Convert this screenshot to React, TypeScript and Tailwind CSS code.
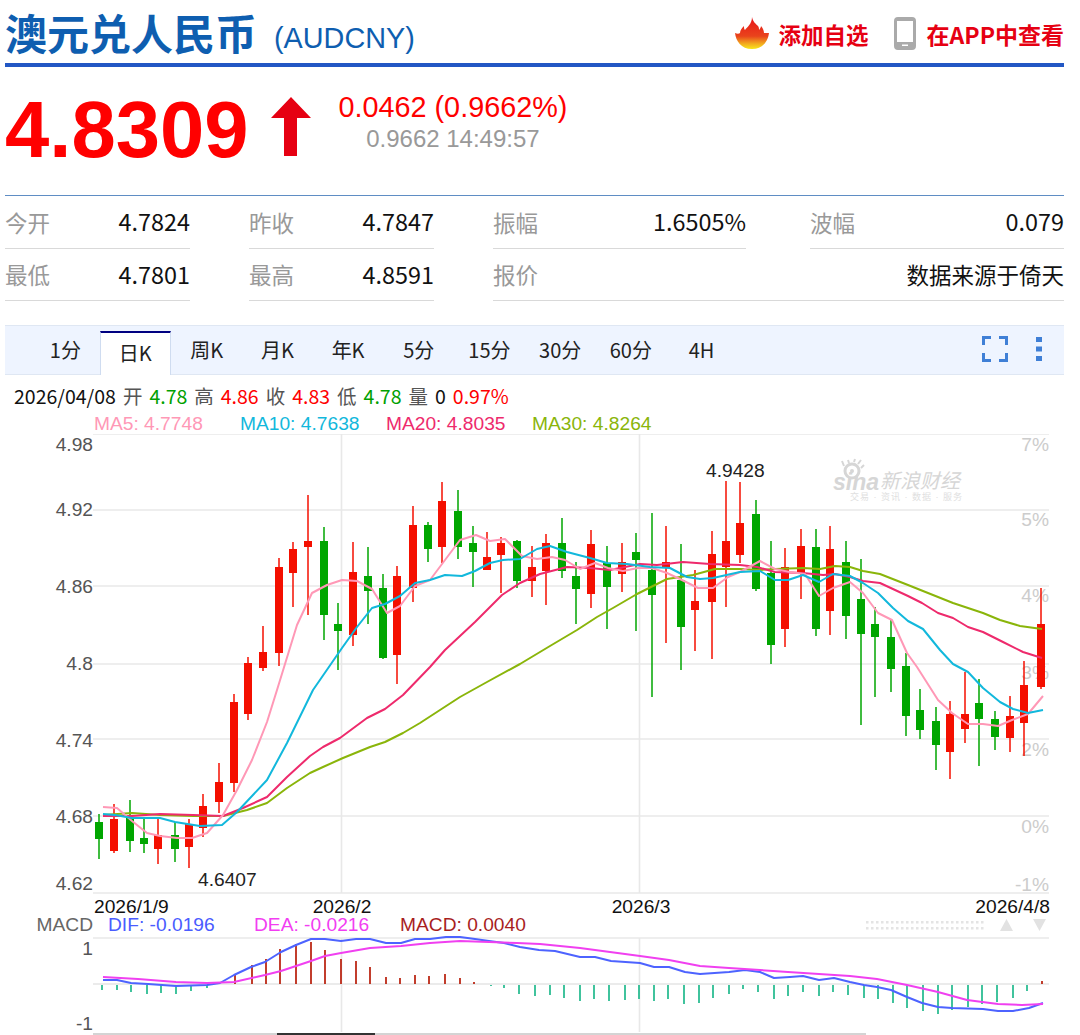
const candles: [number, string, number, number, number, number][] = [
  [99, 'g', 814, 822, 839, 859], [114, 'r', 804, 819, 851, 853], [130, 'g', 800, 818, 841, 852], [144, 'g', 819, 838, 844, 853],
  [158, 'r', 817, 835, 849, 864], [175, 'g', 822, 835, 849, 862], [189, 'r', 819, 824, 847, 868], [203, 'r', 794, 806, 828, 837],
  [219, 'r', 763, 782, 802, 813], [234, 'r', 694, 702, 783, 792], [248, 'r', 657, 663, 714, 720], [263, 'r', 626, 652, 668, 671],
  [279, 'r', 558, 567, 653, 666], [293, 'r', 542, 549, 573, 607], [308, 'r', 495, 541, 547, 615], [324, 'g', 527, 541, 615, 640],
  [338, 'g', 603, 624, 631, 670], [353, 'r', 542, 572, 635, 646], [368, 'g', 547, 576, 591, 624], [383, 'g', 574, 588, 658, 659],
  [397, 'r', 566, 576, 655, 684], [413, 'r', 506, 525, 588, 602], [428, 'g', 522, 525, 549, 562], [442, 'r', 482, 501, 547, 563],
  [458, 'g', 490, 511, 547, 559], [473, 'g', 526, 543, 552, 587], [487, 'r', 532, 557, 570, 570], [501, 'r', 537, 543, 555, 593],
  [517, 'g', 540, 541, 581, 588], [532, 'r', 546, 567, 581, 597], [546, 'r', 534, 543, 571, 605], [562, 'g', 518, 543, 571, 578],
  [576, 'g', 562, 576, 589, 624], [591, 'r', 530, 544, 594, 608], [607, 'g', 546, 563, 587, 629], [622, 'r', 543, 562, 574, 592],
  [636, 'g', 533, 552, 560, 631], [652, 'g', 513, 570, 595, 697], [666, 'r', 526, 562, 567, 643], [681, 'g', 544, 580, 627, 670],
  [695, 'r', 570, 601, 610, 651], [712, 'r', 531, 554, 602, 659], [726, 'r', 481, 541, 567, 607], [740, 'r', 482, 523, 555, 563],
  [756, 'g', 500, 514, 589, 591], [771, 'g', 541, 573, 645, 664], [785, 'r', 548, 567, 629, 647], [801, 'r', 529, 546, 573, 599],
  [816, 'g', 529, 547, 629, 636], [830, 'r', 526, 549, 611, 635], [846, 'g', 541, 562, 616, 639], [861, 'g', 559, 599, 634, 725],
  [875, 'g', 607, 624, 637, 697], [891, 'g', 619, 637, 669, 692], [906, 'g', 653, 666, 716, 736], [920, 'g', 689, 710, 730, 739],
  [936, 'g', 707, 721, 745, 770], [950, 'r', 701, 714, 752, 779], [965, 'r', 672, 714, 729, 743], [979, 'g', 679, 703, 719, 766],
  [995, 'g', 711, 719, 737, 750], [1010, 'r', 696, 716, 738, 752], [1024, 'r', 661, 685, 723, 756], [1041, 'r', 588, 624, 687, 689],
]

const ma5 = '103,807 117,808 132,821 147,833 160,836 177,838 192,838 207,833 223,815 237,790 252,760 267,722 277,690 297,625 312,593 327,585 342,580 357,581 372,589 387,613 400,606 415,586 430,580 445,560 460,540 476,535 490,541 505,539 522,556 537,559 552,557 565,560 580,569 595,563 608,568 623,571 638,568 652,568 667,573 682,580 698,588 713,588 728,577 740,572 760,561 775,569 790,572 805,574 819,596 833,588 850,582 863,593 878,613 892,620 907,653 917,667 938,700 952,713 968,724 983,724 998,726 1012,720 1028,714 1043,696'
const ma10 = '103,814 115,815 132,818 160,818 175,822 200,826 222,825 237,812 267,780 287,743 313,690 342,648 357,627 372,608 385,604 400,596 415,583 430,580 445,575 462,576 475,571 490,563 503,560 520,559 537,549 550,546 567,552 590,558 607,563 627,564 650,567 670,568 687,577 700,579 713,578 740,572 760,571 775,580 788,580 803,575 819,582 833,574 850,576 863,583 878,593 893,608 908,621 923,629 940,650 953,664 968,672 983,688 1000,702 1013,709 1028,713 1043,710'
const ma20 = '103,816 132,816 160,814 193,815 223,816 243,808 267,797 287,777 310,756 323,747 340,738 367,718 385,709 403,695 430,667 445,650 475,622 502,595 520,583 540,574 567,567 590,568 610,570 640,564 657,565 683,562 710,564 740,565 757,567 775,572 803,573 823,575 835,574 850,577 863,581 880,583 908,596 922,603 938,613 953,618 968,627 983,632 1003,642 1023,652 1042,658'
const ma30 = '103,815 132,813 160,815 193,816 223,816 247,810 267,803 287,788 310,773 323,767 343,758 370,747 385,742 403,733 420,723 440,710 460,697 487,682 520,664 550,646 577,630 597,617 613,608 637,594 667,579 693,575 715,569 740,569 760,570 775,569 803,568 820,569 835,566 850,567 863,571 880,574 908,585 933,595 953,603 983,613 1000,620 1020,626 1042,629'
const dif = '103,980 117,980 131,983 148,984 176,986 207,985 220,983 234,975 251,967 265,962 281,952 296,945 311,939 325,939 341,941 356,939 370,939 386,943 401,943 415,939 430,939 446,937 460,937 475,939 489,941 504,943 520,947 539,950 555,951 580,957 595,957 611,961 640,963 654,967 669,967 685,972 700,974 729,972 745,970 760,972 774,978 790,977 803,976 819,980 834,978 850,982 864,985 877,987 891,990 907,997 922,1003 938,1007 952,1008 983,1009 998,1011 1013,1011 1029,1008 1043,1003'
const dea = '103,977 138,979 176,982 207,983 234,982 265,975 281,971 296,966 311,961 325,956 341,953 370,948 401,946 430,943 460,941 489,942 517,943 540,944 580,948 640,956 669,960 700,966 729,968 760,970 788,972 819,974 850,976 877,979 907,985 938,992 967,1000 998,1004 1022,1005 1043,1004'

const histRed: [number, number][] = [[235, 974], [252, 965], [266, 959], [280, 949], [296, 944], [311, 942], [325, 950], [341, 959], [356, 961], [370, 967], [386, 977], [400, 978], [415, 975], [429, 976], [445, 974], [460, 978], [474, 982], [1042, 981]]
const histGreen: [number, number][] = [[102, 990], [117, 990], [131, 992], [147, 994], [161, 993], [176, 994], [191, 991], [207, 988], [491, 986], [504, 988], [519, 994], [535, 996], [550, 995], [564, 998], [580, 1001], [594, 999], [609, 1001], [625, 1000], [639, 999], [654, 1001], [668, 999], [684, 1004], [699, 1003], [713, 998], [729, 994], [743, 989], [758, 992], [774, 999], [788, 996], [803, 992], [819, 996], [833, 992], [848, 995], [864, 998], [878, 999], [893, 1003], [907, 1008], [923, 1011], [938, 1014], [952, 1010], [968, 1007], [982, 1004], [997, 1002], [1013, 998], [1027, 991]]

const priceLabels: [string, number][] = [['4.98', 451], ['4.92', 516], ['4.86', 593], ['4.8', 670], ['4.74', 747], ['4.68', 823], ['4.62', 890]]
const pctLabels: [string, number][] = [['7%', 451], ['5%', 526], ['4%', 602], ['3%', 679], ['2%', 756], ['0%', 833], ['-1%', 891]]
const gridYs = [434, 510, 586, 664, 739, 816, 893]

const dotXs = Array.from({ length: 24 }, (_, i) => 866 + i * 5)

function Chart() {
  return (
    <svg viewBox="0 434 1080 601" className="block w-[1080px] h-[601px] [font-family:'Liberation_Sans','Noto_Sans_CJK_SC',sans-serif]">
      {gridYs.map((y) => (
        <line key={y} x1="93" x2="1049" y1={y} y2={y} stroke="#e8e8e8" strokeWidth="1.6" />
      ))}
      <line x1="341.5" x2="341.5" y1="434" y2="893" stroke="#e8e8e8" strokeWidth="1.6" />
      <line x1="639.5" x2="639.5" y1="434" y2="893" stroke="#e8e8e8" strokeWidth="1.6" />

      {priceLabels.map(([t, y]) => (
        <text key={t} x="93" y={y} textAnchor="end" fontSize="19.2" fill="#555">{t}</text>
      ))}
      {pctLabels.map(([t, y]) => (
        <text key={t} x="1049" y={y} textAnchor="end" fontSize="19.2" fill="#ccc">{t}</text>
      ))}

      {/* sina watermark */}
      <g fill="#d6d6d6">
        <text x="833" y="490" fontSize="23" fontWeight="700" fontStyle="italic">sina</text>
        <circle cx="852" cy="471" r="7" fill="none" stroke="#d6d6d6" strokeWidth="3" />
        <circle cx="852" cy="471" r="2" />
        <path d="M844 466 L842 461 M849 463 L848 460 M854 462 L855 459 M858 464 L861 460 M861 468 L864 465" stroke="#d6d6d6" strokeWidth="2" />
        <text x="880" y="488" fontSize="20" fontStyle="italic">新浪财经</text>
        <text x="850" y="500" fontSize="9" letterSpacing="1" fill="#e0e0e0">交易 · 资讯 · 数据 · 服务</text>
      </g>

      {candles.map(([x, c, wt, bt, bb, wb]) => {
        const color = c === 'r' ? '#f40f00' : '#00a600'
        return (
          <g key={x}>
            <line x1={x} x2={x} y1={wt} y2={wb} stroke={color} strokeWidth="1.5" />
            <rect x={x - 4} y={bt} width="8" height={bb - bt} fill={color} />
          </g>
        )
      })}

      <polyline points={ma30} fill="none" stroke="#8ab50a" strokeWidth="2" strokeLinejoin="round" />
      <polyline points={ma20} fill="none" stroke="#ee2a6c" strokeWidth="2" strokeLinejoin="round" />
      <polyline points={ma5} fill="none" stroke="#ff98b6" strokeWidth="2" strokeLinejoin="round" />
      <polyline points={ma10} fill="none" stroke="#12b8dc" strokeWidth="2" strokeLinejoin="round" />

      <text x="706" y="477" fontSize="19.2" fill="#222">4.9428</text>
      <text x="198" y="886" fontSize="19.2" fill="#222">4.6407</text>

      <text x="94" y="913" fontSize="19.2" fill="#111">2026/1/9</text>
      <text x="342" y="913" fontSize="19.2" fill="#111" textAnchor="middle">2026/2</text>
      <text x="641" y="913" fontSize="19.2" fill="#111" textAnchor="middle">2026/3</text>
      <text x="1050" y="913" fontSize="19.2" fill="#111" textAnchor="end">2026/4/8</text>

      {/* MACD panel */}
      <text x="93" y="931" fontSize="19.2" fill="#666" textAnchor="end">MACD</text>
      <text x="108" y="931" fontSize="19.2" fill="#4a5cff">DIF: -0.0196</text>
      <text x="254" y="931" fontSize="19.2" fill="#f23df2">DEA: -0.0216</text>
      <text x="400" y="931" fontSize="19.2" fill="#a81e1e">MACD: 0.0040</text>

      {[0, 1].map((r) =>
        dotXs.map((x) => <rect key={`${r}-${x}`} x={x} y={921 + r * 6} width="2.5" height="2.5" fill="#e4e4e4" />)
      )}
      <polygon points="1006.5,919 1013,931 1000,931" fill="#e2e2e2" />
      <polygon points="1033,919 1046,919 1039.5,931" fill="#e2e2e2" />

      <line x1="93" x2="1049" y1="938" y2="938" stroke="#e8e8e8" strokeWidth="1.6" />
      <line x1="93" x2="1049" y1="984" y2="984" stroke="#e4e4e4" strokeWidth="1.6" />
      <line x1="341.5" x2="341.5" y1="938" y2="1032" stroke="#e8e8e8" strokeWidth="1.6" />
      <line x1="639.5" x2="639.5" y1="938" y2="1032" stroke="#e8e8e8" strokeWidth="1.6" />
      <text x="93" y="955" fontSize="19.2" fill="#555" textAnchor="end">1</text>
      <text x="93" y="1030" fontSize="19.2" fill="#555" textAnchor="end">-1</text>

      {histRed.map(([x, y]) => (
        <line key={x} x1={x} x2={x} y1={y} y2="984" stroke="#b81c08" strokeWidth="1.7" />
      ))}
      {histGreen.map(([x, y]) => (
        <line key={x} x1={x} x2={x} y1="985" y2={y} stroke="#1fb98c" strokeWidth="1.7" />
      ))}
      <polyline points={dif} fill="none" stroke="#4d63ff" strokeWidth="2" strokeLinejoin="round" />
      <polyline points={dea} fill="none" stroke="#f040f0" strokeWidth="2" strokeLinejoin="round" />

      {/* range slider at the bottom edge */}
      <rect x="93" y="1033" width="773" height="2" fill="#d4d4d4" />
      <rect x="277" y="1033" width="98" height="2" fill="#333" />
    </svg>
  )
}

function Flame() {
  return (
    <svg viewBox="0 0 36 36" className="w-9 h-9 mt-[3px]">
      <defs>
        <linearGradient id="flame" x1="0" y1="0" x2="0" y2="1">
          <stop offset="0" stopColor="#e8141a" />
          <stop offset="0.6" stopColor="#e9441c" />
          <stop offset="0.82" stopColor="#f2a51e" />
          <stop offset="1" stopColor="#f8e71c" />
        </linearGradient>
      </defs>
      <path
        fill="url(#flame)"
        d="M18 2c1 5 4 7 6 9 1 1 1 3 1 4 1-1 2-3 2-4 2 2 3 5 3 7 2 0 4 0 5 0-1 8-6 16-17 16S2 26 1 18c2 1 4 1 5 0 0-3 2-5 4-7 0 2 0 3 1 4 2-3 7-6 7-13z"
      />
    </svg>
  )
}

function Phone() {
  return (
    <svg viewBox="0 0 22 33" className="w-[22px] h-[33px] mt-[3px]">
      <path fill="#aaa" fillRule="evenodd" d="M4 0h14a4 4 0 0 1 4 4v25a4 4 0 0 1-4 4H4a4 4 0 0 1-4-4V4a4 4 0 0 1 4-4zM3 4v21h16V4zM8 27.500v1.500h6v-1.500z" />
    </svg>
  )
}

function Stat({ label, value, className, valueClass = 'text-[23.4px]' }: { label: string; value: string; className: string; valueClass?: string }) {
  return (
    <div className={`flex items-center justify-between border-b border-[#d9d9d9] h-full ${className}`}>
      <span className="text-[#999]">{label}</span>
      <span className={`text-[#111] ${valueClass}`}>{value}</span>
    </div>
  )
}

const tabs = ['1分', '日K', '周K', '月K', '年K', '5分', '15分', '30分', '60分', '4H']

export default function App() {
  return (
    <div className="w-[1080px] h-[1035px] overflow-hidden bg-white [font-family:'Liberation_Sans','Noto_Sans_CJK_SC',sans-serif]">
      {/* title */}
      <header className="ml-[5px] w-[1059px] h-[67px] border-b-4 border-[#2257c4] flex items-center justify-between">
        <div className="flex items-center">
          <h1 className="text-[42px] leading-none font-bold text-[#0e5eb0] [font-family:'Noto_Sans_CJK_SC',sans-serif]">澳元兑人民币</h1>
          <span className="ml-[17px] mt-[13px] text-[28.8px] leading-none text-[#0e5eb0]">(AUDCNY)</span>
        </div>
        <div className="flex items-center text-[22.5px] font-bold text-[#e60012] [font-family:'Noto_Sans_CJK_SC',sans-serif] leading-none">
          <Flame />
          <span className="ml-[9px] mt-[5px]">添加自选</span>
          <span className="ml-[25px]"><Phone /></span>
          <span className="ml-[11px] mt-[5px] text-[23px]">在APP中查看</span>
        </div>
      </header>

      {/* price */}
      <div className="ml-[5px] w-[1059px] h-[129px] border-b border-[#5f8dc4] flex items-start pt-[23px]">
        <span className="text-[79.6px] leading-[80px] font-bold text-[#ff0000]">4.8309</span>
        <svg viewBox="0 0 40 59" className="w-10 h-[59px] ml-[23px] mt-[7px]">
          <polygon points="20,0 40,21 26,21 26,59 13,59 13,21 0,21" fill="#e60012" />
        </svg>
        <div className="ml-[27px] flex flex-col items-center">
          <span className="text-[28.8px] leading-[34px] text-[#ff0000]">0.0462 (0.9662%)</span>
          <span className="text-[24px] leading-[30px] text-[#999]">0.9662 14:49:57</span>
        </div>
      </div>

      {/* quote table */}
      <div className="ml-[5px] w-[1059px] text-[22.5px] leading-none [font-family:'Noto_Sans_CJK_SC',sans-serif]">
        <div className="flex h-[53px]">
          <Stat label="今开" value="4.7824" className="w-[185px]" />
          <Stat label="昨收" value="4.7847" className="w-[185px] ml-[59px]" />
          <Stat label="振幅" value="1.6505%" className="w-[253px] ml-[59px]" />
          <Stat label="波幅" value="0.079" className="w-[254px] ml-[64px]" />
        </div>
        <div className="flex h-[52px]">
          <Stat label="最低" value="4.7801" className="w-[185px]" />
          <Stat label="最高" value="4.8591" className="w-[185px] ml-[59px]" />
          <Stat label="报价" value="数据来源于倚天" className="w-[571px] ml-[59px]" valueClass="text-[22.5px]" />
        </div>
      </div>

      {/* period tabs */}
      <div className="mt-[24px] ml-[5px] w-[1059px] h-[50px] bg-[#eef4ff] border-y border-[#dfe7f3] flex items-end pl-[25px] relative text-[20px] leading-none text-[#222] [font-family:'Noto_Sans_CJK_SC',sans-serif]">
        {tabs.map((t) => (
          <div
            key={t}
            className={
              t === '日K'
                ? 'w-[71px] -ml-px mr-[0.7px] h-[44px] -mb-px bg-white border-x border-t-2 border-x-[#cfdcf0] border-t-[#000080] flex items-center justify-center pb-[2px]'
                : 'w-[70.7px] h-[50px] flex items-center justify-center pt-[2px]'
            }
          >
            {t}
          </div>
        ))}
        <svg viewBox="0 0 26 26" className="absolute left-[977px] top-[10px] w-[26px] h-[26px]" fill="none" stroke="#3f7fd6" strokeWidth="3">
          <path d="M1.500 9V1.500H9M17 1.500h7.500V9M24.500 17v7.500H17M9 24.500H1.500V17" />
        </svg>
        <svg viewBox="0 0 6 24" className="absolute left-[1031px] top-[11px] w-[6px] h-[24px]" fill="#3f7fd6">
          <rect y="0" width="6" height="5" />
          <rect y="9.500" width="6" height="5" />
          <rect y="19" width="6" height="5" />
        </svg>
      </div>

      {/* day summary + MA legend */}
      <div className="h-[59px]">
        <div className="pl-[14px] pt-[7px] h-[35px] flex items-center text-[19.5px] leading-none gap-[7px] [font-family:'Noto_Sans_CJK_SC',sans-serif] text-[#555]">
          <span className="text-[#111]">2026/04/08</span>
          <span>开</span><span className="text-[#00a000]">4.78</span>
          <span>高</span><span className="text-[#ff0000]">4.86</span>
          <span>收</span><span className="text-[#ff0000]">4.83</span>
          <span>低</span><span className="text-[#00a000]">4.78</span>
          <span>量</span><span className="text-[#111]">0</span>
          <span className="text-[#ff0000]">0.97%</span>
        </div>
        <div className="pl-[94px] pt-[2px] flex text-[19.2px] leading-[24px]">
          <span className="w-[146px] text-[#ff98b6]">MA5: 4.7748</span>
          <span className="w-[146px] text-[#12b8dc]">MA10: 4.7638</span>
          <span className="w-[146px] text-[#ee2a6c]">MA20: 4.8035</span>
          <span className="text-[#8ab50a]">MA30: 4.8264</span>
        </div>
      </div>

      <Chart />
    </div>
  )
}
